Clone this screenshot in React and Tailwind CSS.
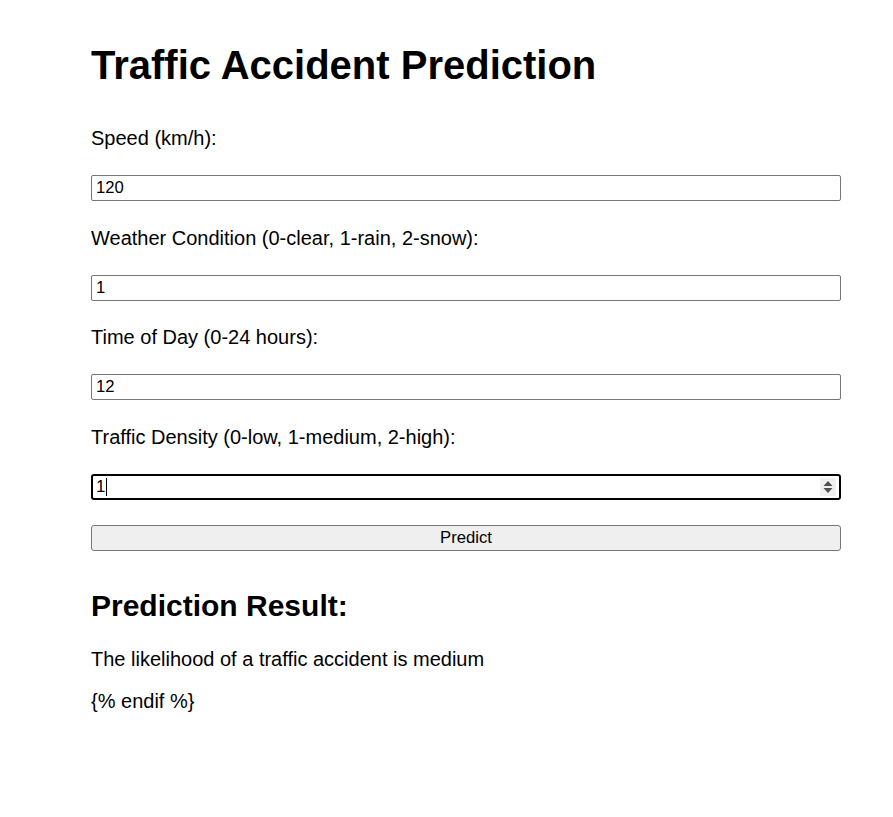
import React from "react";

const font = { fontFamily: '"Liberation Sans", Arial, sans-serif' };

function Field({ label, value, className = "" }) {
  return (
    <div className={"flex flex-col " + className}>
      <label className="text-[20px] leading-[23px] text-black">{label}</label>
      <input
        readOnly
        value={value}
        className="mt-[25px] h-[26px] w-[750px] rounded-[2px] border border-[#767676] bg-white px-[4px] text-[16.67px] leading-[20px] text-black outline-none"
      />
    </div>
  );
}

export default function App() {
  return (
    <div className="min-h-[817px] w-[893px] bg-white text-black" style={font}>
      <div className="flex w-[750px] flex-col pl-0 pt-[42px] ml-[91px]">
        <h1 className="text-[40px] font-bold leading-[46px]">Traffic Accident Prediction</h1>

        <Field className="mt-[39px]" label="Speed (km/h):" value="120" />
        <Field className="mt-[26px]" label="Weather Condition (0-clear, 1-rain, 2-snow):" value="1" />
        <Field className="mt-[25px]" label="Time of Day (0-24 hours):" value="12" />

        <div className="mt-[26px] flex flex-col">
          <label className="text-[20px] leading-[23px] text-black">
            Traffic Density (0-low, 1-medium, 2-high):
          </label>
          <div className="relative mt-[25px] flex h-[26px] w-[750px] items-center rounded-[3px] border-2 border-black bg-white pl-[3px]">
            <span className="text-[16.67px] leading-[20px] text-black">1</span>
            <span className="ml-[1px] h-[18px] w-[1px] bg-black" />
            <div className="absolute right-[3px] top-[2px] flex h-[18px] w-[16px] flex-col items-center justify-center gap-[2px] bg-[#f0f0f0]">
              <svg width="10" height="14" viewBox="0 0 10 14">
                <path d="M5 1 L9.5 6 L0.5 6 Z" fill="#505050" />
                <path d="M5 13 L9.5 8 L0.5 8 Z" fill="#505050" />
              </svg>
            </div>
          </div>
        </div>

        <button className="mt-[25px] h-[26px] w-[750px] rounded-[3px] border border-[#767676] bg-[#efefef] text-center text-[16.67px] leading-[20px] text-black">
          Predict
        </button>

        <h2 className="mt-[38px] text-[30px] font-bold leading-[34px]">Prediction Result:</h2>
        <p className="mt-[25px] text-[20px] leading-[23px]">The likelihood of a traffic accident is medium</p>
        <p className="mt-[19px] text-[20px] leading-[23px]">{"{% endif %}"}</p>
      </div>
    </div>
  );
}
